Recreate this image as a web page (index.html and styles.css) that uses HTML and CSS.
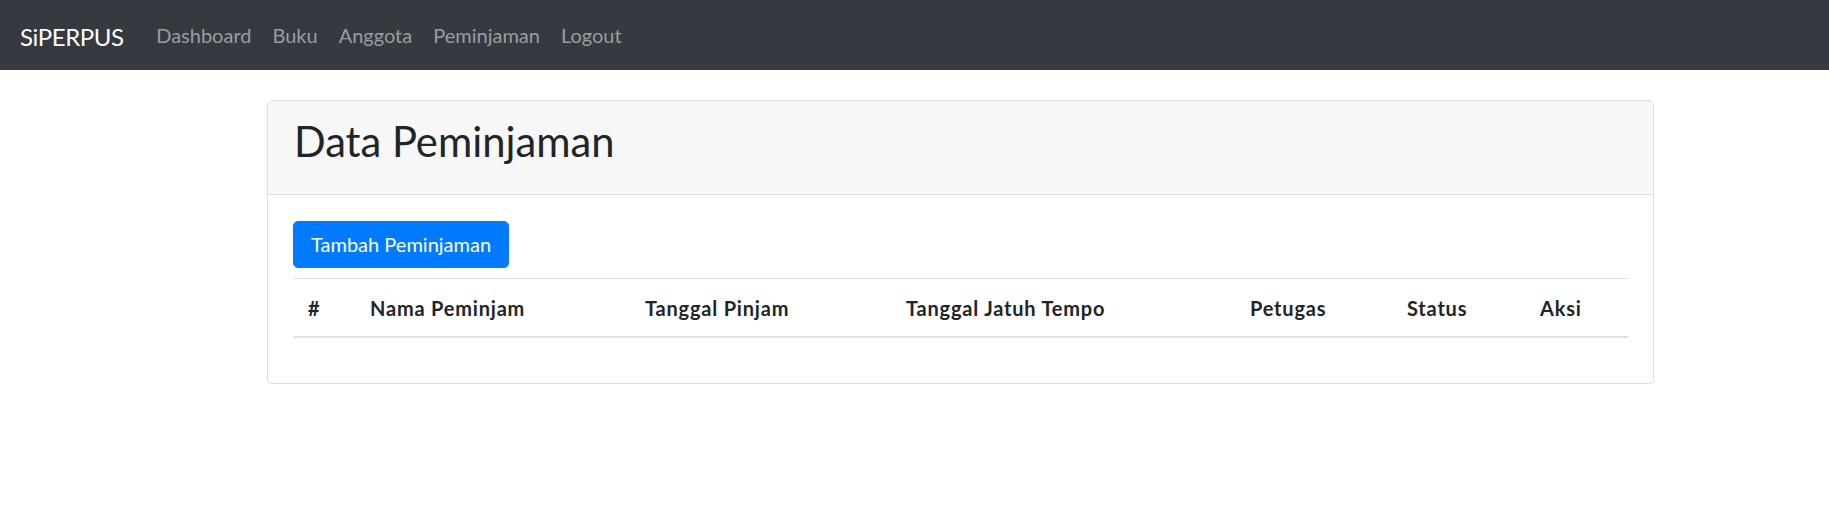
FILE: index.html
```html
<!DOCTYPE html>
<html lang="id">
<head>
<meta charset="utf-8">
<title>SiPERPUS - Data Peminjaman</title>
<link rel="stylesheet" href="styles.css">
</head>
<body>
<nav class="navbar">
  <a class="brand" href="#">SiPERPUS</a>
  <ul class="nav">
    <li><a class="nav-link" href="#">Dashboard</a></li>
    <li><a class="nav-link" href="#">Buku</a></li>
    <li><a class="nav-link" href="#">Anggota</a></li>
    <li><a class="nav-link" href="#">Peminjaman</a></li>
    <li><a class="nav-link" href="#">Logout</a></li>
  </ul>
</nav>
<main class="container">
  <section class="card">
    <header class="card-header">
      <h2 class="card-title">Data Peminjaman</h2>
    </header>
    <div class="card-body">
      <a class="btn-primary" href="#">Tambah Peminjaman</a>
      <table class="table">
        <thead>
          <tr>
            <th class="col-no">#</th>
            <th class="col-nama">Nama Peminjam</th>
            <th class="col-pinjam">Tanggal Pinjam</th>
            <th class="col-tempo">Tanggal Jatuh Tempo</th>
            <th class="col-petugas">Petugas</th>
            <th class="col-status">Status</th>
            <th class="col-aksi">Aksi</th>
          </tr>
        </thead>
        <tbody></tbody>
      </table>
    </div>
  </section>
</main>
</body>
</html>
```
FILE: styles.css
```css
* { box-sizing: border-box; }

html, body {
  margin: 0;
  padding: 0;
  background: #ffffff;
  color: #212529;
  font-family: Lato, "Open Sans", "Noto Sans", sans-serif;
  font-size: 20px;
}

a { text-decoration: none; }

/* Navbar */
.navbar {
  display: flex;
  align-items: center;
  height: 70px;
  padding: 0 20px;
  background: #343a40;
}

.brand {
  color: #ffffff;
  font-size: 24px;
  line-height: 36px;
  letter-spacing: -0.4px;
  padding-top: 3px;
  margin-right: 22px;
}

.nav {
  display: flex;
  list-style: none;
  margin: 0;
  padding: 0;
}

.nav-link {
  display: block;
  padding: 0 10.5px;
  line-height: 30px;
  font-size: 20px;
  color: #9a9da0;
}

/* Layout */
.container {
  width: 1387px;
  margin: 30px 0 0 267px;
}

/* Card */
.card {
  border: 1px solid #dfdfdf;
  border-radius: 5px;
  overflow: hidden;
}

.card-header {
  background: #f7f7f7;
  border-bottom: 1px solid #dfdfdf;
  padding: 16px 26px 19px;
}

.card-title {
  margin: 0 0 10px;
  font-size: 41.7px;
  font-weight: 400;
  line-height: 48px;
  color: #212529;
}

.card-body {
  padding: 25px;
}

/* Button */
.btn-primary {
  display: inline-block;
  margin-top: 1px;
  padding: 8px 17px;
  line-height: 29px;
  font-size: 20px;
  color: #ffffff;
  background: #007bff;
  border: 1px solid #007bff;
  border-radius: 5px;
}

/* Table */
.table {
  width: 100%;
  margin: 10px 0 20px;
  border-collapse: collapse;
  table-layout: fixed;
}

.table th {
  text-align: left;
  font-weight: 700;
  font-size: 20px;
  letter-spacing: 0.8px;
  line-height: 30px;
  padding: 14px 15px 13px;
  border-top: 1px solid #dee2e6;
  border-bottom: 2px solid #dee2e6;
  color: #212529;
}

.col-no { width: 62px; }
.col-nama { width: 275px; }
.col-pinjam { width: 261px; }
.col-tempo { width: 344px; }
.col-petugas { width: 157px; }
.col-status { width: 133px; }
.col-aksi { width: 103px; }
```
